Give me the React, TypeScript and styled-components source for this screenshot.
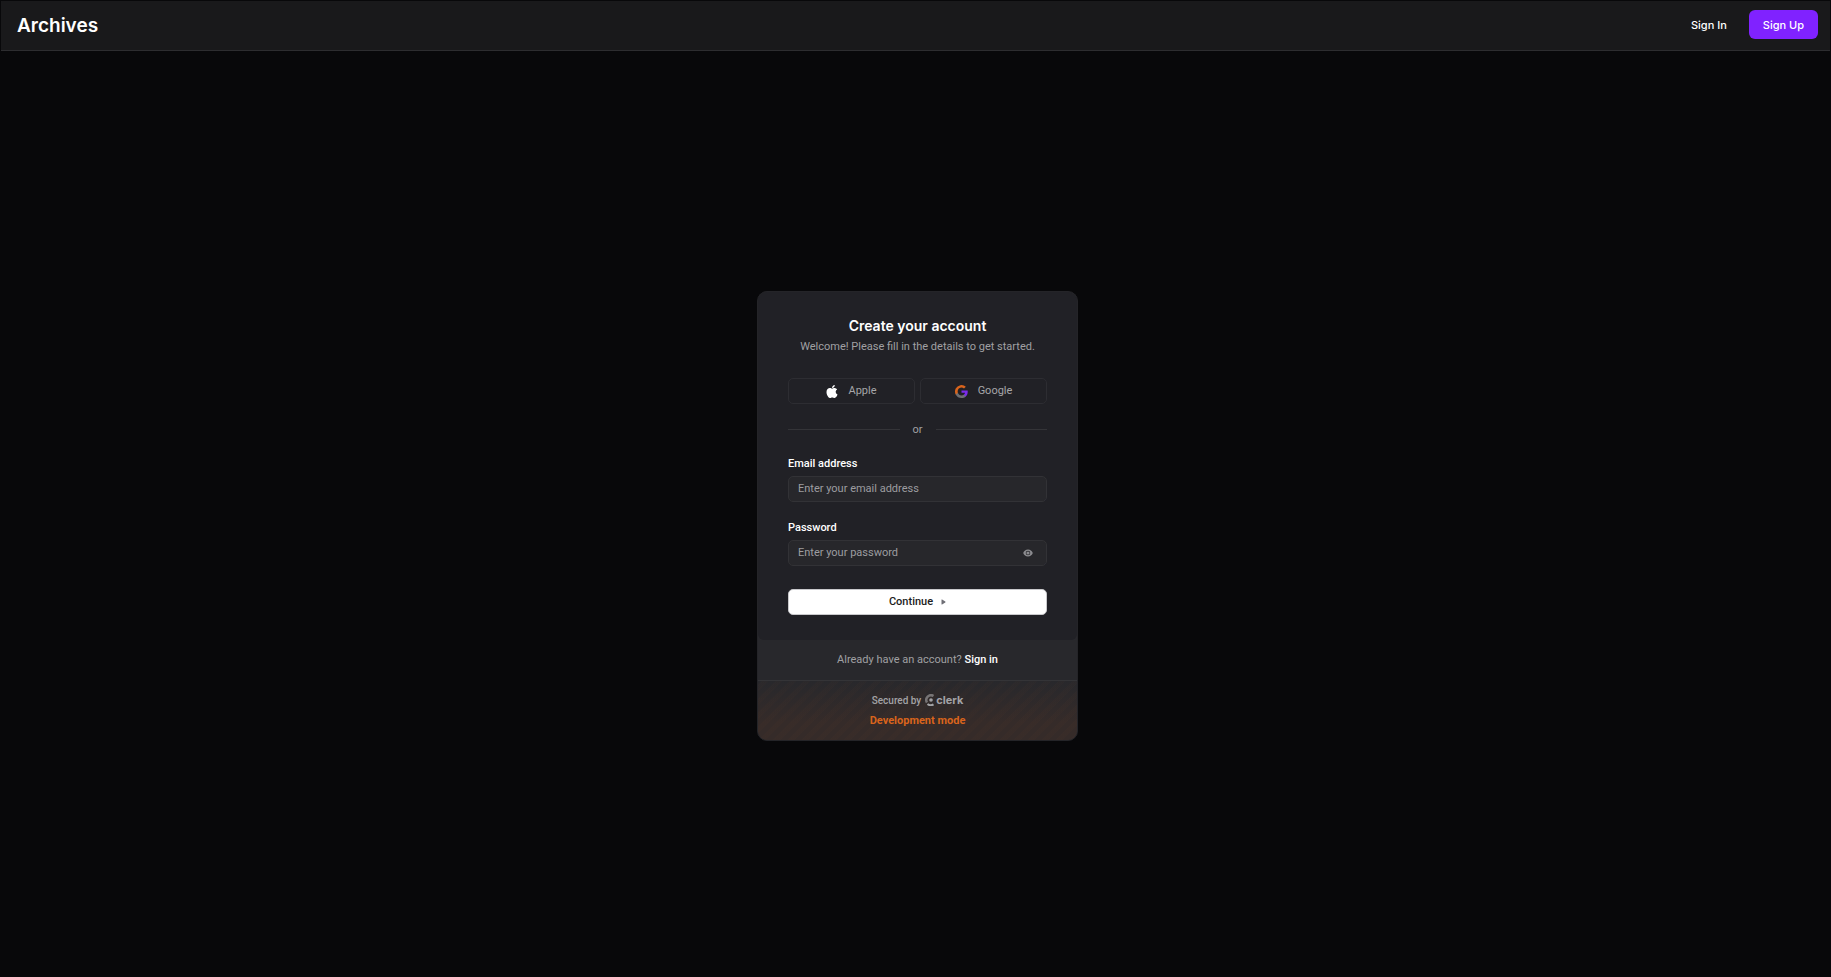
import React from "react";
import styled, { createGlobalStyle } from "styled-components";

const GlobalStyle = createGlobalStyle`
  * { box-sizing: border-box; }
  body { margin: 0; background: #000; color: #fff; font-family: Inter, "Liberation Sans", sans-serif; font-size: 11px; line-height: 14px; }
  button, input { font: inherit; }
`;

const Page = styled.div`
  display: flex;
  flex-direction: column;
  min-height: 100vh;
  padding: 1px;
  background: #08080a;
`;

const Header = styled.header`
  display: flex;
  align-items: center;
  justify-content: space-between;
  height: 50px;
  padding: 0 12px 2px 16px;
  background: #19191b;
  border-bottom: 1px solid #2d2d30;
`;

const Brand = styled.h1`
  margin: 0;
  padding-top: 2px;
  font-size: 19px;
  line-height: 24px;
  font-weight: 600;
`;

const HeaderActions = styled.nav`
  display: flex;
  align-items: center;
  gap: 8px;
`;

const HeaderButton = styled.button<{ $primary?: boolean }>`
  height: 29px;
  padding: 0 14px;
  border: 0;
  border-radius: 6px;
  background: ${(p) => (p.$primary ? "#8022ff" : "transparent")};
  color: #fff;
  font-weight: 500;
`;

const Main = styled.main`
  display: flex;
  flex: 1;
  align-items: center;
  justify-content: center;
  padding: 4px 0 0 4px;
`;

const Card = styled.section`
  width: 321px;
  overflow: hidden;
  border: 1px solid #242428;
  border-radius: 10px;
  background: #28282c;
  font-family: Roboto, "Liberation Sans", sans-serif;
`;

const CardBody = styled.form`
  padding: 25px 30px;
  border-radius: 0 0 6px 6px;
  background: #212126;
`;

const CardTitle = styled.h2`
  margin: 0;
  font-family: Inter, "Liberation Sans", sans-serif;
  font-size: 14px;
  line-height: 18px;
  font-weight: 600;
  text-align: center;
`;

const Muted = styled.p`
  margin: 0;
  color: #a0a0a3;
  text-align: center;
`;

const Subtitle = styled(Muted)`
  margin-top: 5px;
`;

const SocialRow = styled.div`
  display: grid;
  grid-template-columns: 1fr 1fr;
  gap: 5px;
  margin-top: 24px;
`;

const SocialButton = styled.button`
  display: flex;
  align-items: center;
  justify-content: center;
  gap: 10px;
  height: 26px;
  padding: 1px 0 0;
  border: 1px solid #2d2d32;
  border-radius: 5px;
  background: transparent;
  color: #a6a6a9;
`;

const Divider = styled.div`
  display: flex;
  align-items: center;
  gap: 13px;
  margin: 19px 0 20px;
  color: #a0a0a3;

  &::before, &::after {
    content: "";
    flex: 1;
    height: 1px;
    background: #343438;
  }
`;

const Field = styled.div`
  display: flex;
  flex-direction: column;
  gap: 5px;
  margin-bottom: 19px;
`;

const Label = styled.label`
  align-self: flex-start;
  font-weight: 500;
`;

const InputBox = styled.div`
  display: flex;
  align-items: center;
  height: 26px;
  padding: 0 13px 0 9px;
  border: 1px solid #323236;
  border-radius: 5px;
  background: #27272b;
`;

const Input = styled.input`
  flex: 1;
  min-width: 0;
  height: 22px;
  padding: 0;
  border: 0;
  outline: 0;
  background: transparent;
  color: #fff;

  &::placeholder { color: #9d9da0; opacity: 1; }
`;

const IconButton = styled.button`
  display: flex;
  padding: 0;
  border: 0;
  background: transparent;
  color: #8b8b8f;
`;

const SubmitButton = styled.button`
  display: flex;
  align-items: center;
  justify-content: center;
  gap: 8px;
  width: 100%;
  height: 26px;
  margin-top: 23px;
  padding: 1px 0 0;
  border: 1px solid #c9c9cc;
  border-radius: 5px;
  background: #fff;
  color: #1c1c20;
  font-weight: 500;
`;

const SignInLine = styled(Muted)`
  padding: 13px 0;
`;

const SignInLink = styled.a`
  color: #fff;
  font-weight: 500;
  text-decoration: none;
`;

const CardFooter = styled.footer`
  display: flex;
  flex-direction: column;
  align-items: center;
  gap: 7px;
  padding: 13px 0 12px;
  border-top: 1px solid #343437;
  background:
    repeating-linear-gradient(-45deg, rgba(216, 101, 28, 0.02) 0 5px, transparent 5px 10px),
    linear-gradient(#28282c, #352b29 70%);
`;

const Secured = styled.p`
  display: flex;
  align-items: center;
  gap: 4px;
  margin: 0;
  color: #a3a3a6;
  font-size: 10px;
  line-height: 13px;
  font-weight: 500;
`;

const ClerkLink = styled.a`
  display: flex;
  align-items: center;
  gap: 1px;
  color: #a3a3a6;
  font-family: Inter, "Liberation Sans", sans-serif;
  font-size: 11px;
  font-weight: 700;
  text-decoration: none;
`;

const DevMode = styled.p`
  margin: 0;
  color: #d9641c;
  font-weight: 700;
`;

const AppleIcon = () => (
  <svg width="12" height="15" viewBox="0 0 384 512" fill="#fff" aria-hidden="true">
    <path d="M318.7 268.7c-.2-36.7 16.4-64.4 50-84.8-18.8-26.9-47.2-41.7-84.7-44.6-35.5-2.8-74.3 20.7-88.5 20.7-15 0-49.4-19.7-76.4-19.7C63.3 141.2 4 184.8 4 273.5q0 39.3 14.4 81.2c12.8 36.7 59 126.7 107.2 125.2 25.2-.6 43-17.9 75.8-17.9 31.8 0 48.3 17.9 76.4 17.9 48.6-.7 90.4-82.5 102.6-119.3-65.2-30.7-61.7-90-61.7-91.9zm-56.6-164.2c27.3-32.4 24.8-61.9 24-72.5-24.1 1.4-52 16.4-67.9 34.9-17.5 19.8-27.8 44.3-25.6 71.9 26.1 2 49.9-11.4 69.5-34.3z" />
  </svg>
);

const GoogleIcon = () => (
  <svg width="13" height="13" viewBox="0 0 24 24" aria-hidden="true">
    <path fill="#7b2bea" d="M23.5 12.3c0-.8-.1-1.6-.2-2.3H12v4.5h6.5a5.5 5.5 0 0 1-2.4 3.7v3h3.9c2.2-2.1 3.5-5.2 3.5-8.9z" />
    <path fill="#6e6e72" d="M12 24c3.2 0 6-1.1 8-2.9l-3.9-3c-1.1.7-2.5 1.2-4.1 1.2-3.1 0-5.8-2.1-6.7-5H1.3v3.1A12 12 0 0 0 12 24z" />
    <path fill="#d9641c" d="M5.3 14.3a7.2 7.2 0 0 1 0-4.6V6.6H1.3a12 12 0 0 0 0 10.8z" />
    <path fill="#d9641c" d="M12 4.7c1.8 0 3.3.6 4.6 1.8L20 3.1A12 12 0 0 0 1.3 6.6l4 3.1c.9-2.9 3.6-5 6.7-5z" />
  </svg>
);

const EyeIcon = () => (
  <svg width="10" height="8" viewBox="0 0 10 8" fill="none" aria-hidden="true">
    <path fill="currentColor" fillRule="evenodd" d="M5 .5C7.2.5 9 1.8 9.8 4 9 6.2 7.2 7.5 5 7.5S1 6.2.2 4C1 1.8 2.8.5 5 .5zm0 1.2a2.3 2.3 0 1 0 0 4.6 2.3 2.3 0 0 0 0-4.6z" />
    <circle cx="5" cy="4" r="1.6" fill="currentColor" />
  </svg>
);

const ArrowIcon = () => (
  <svg width="5" height="6" viewBox="0 0 5 6" aria-hidden="true">
    <path fill="#6f6f76" d="M.5.8v4.4c0 .3.3.5.6.3l3.2-2.1c.3-.2.3-.6 0-.8L1.1.5C.8.3.5.5.5.8z" />
  </svg>
);

const ClerkIcon = () => (
  <svg width="10" height="12" viewBox="0 0 20 24" fill="none" strokeWidth="4" aria-hidden="true">
    <path stroke="#777475" strokeWidth="5" d="M17 3.9A9.5 9.5 0 0 0 4 17" />
    <path stroke="#a3a3a6" d="M5 20A10 10 0 0 0 17 20.6" />
    <circle cx="12" cy="12" r="3.6" fill="#a3a3a6" />
  </svg>
);

export default function App() {
  return (
    <>
      <GlobalStyle />
      <Page>
        <Header>
          <Brand>Archives</Brand>
          <HeaderActions>
            <HeaderButton type="button">Sign In</HeaderButton>
            <HeaderButton type="button" $primary>Sign Up</HeaderButton>
          </HeaderActions>
        </Header>
        <Main>
          <Card>
            <CardBody>
              <CardTitle>Create your account</CardTitle>
              <Subtitle>Welcome! Please fill in the details to get started.</Subtitle>
              <SocialRow>
                <SocialButton type="button"><AppleIcon />Apple</SocialButton>
                <SocialButton type="button"><GoogleIcon />Google</SocialButton>
              </SocialRow>
              <Divider>or</Divider>
              <Field>
                <Label htmlFor="email">Email address</Label>
                <InputBox>
                  <Input id="email" type="email" placeholder="Enter your email address" />
                </InputBox>
              </Field>
              <Field>
                <Label htmlFor="password">Password</Label>
                <InputBox>
                  <Input id="password" type="password" placeholder="Enter your password" />
                  <IconButton type="button" aria-label="Show password"><EyeIcon /></IconButton>
                </InputBox>
              </Field>
              <SubmitButton type="button">Continue<ArrowIcon /></SubmitButton>
            </CardBody>
            <SignInLine>Already have an account? <SignInLink href="#sign-in">Sign in</SignInLink></SignInLine>
            <CardFooter>
              <Secured>Secured by <ClerkLink href="#clerk"><ClerkIcon />clerk</ClerkLink></Secured>
              <DevMode>Development mode</DevMode>
            </CardFooter>
          </Card>
        </Main>
      </Page>
    </>
  );
}
